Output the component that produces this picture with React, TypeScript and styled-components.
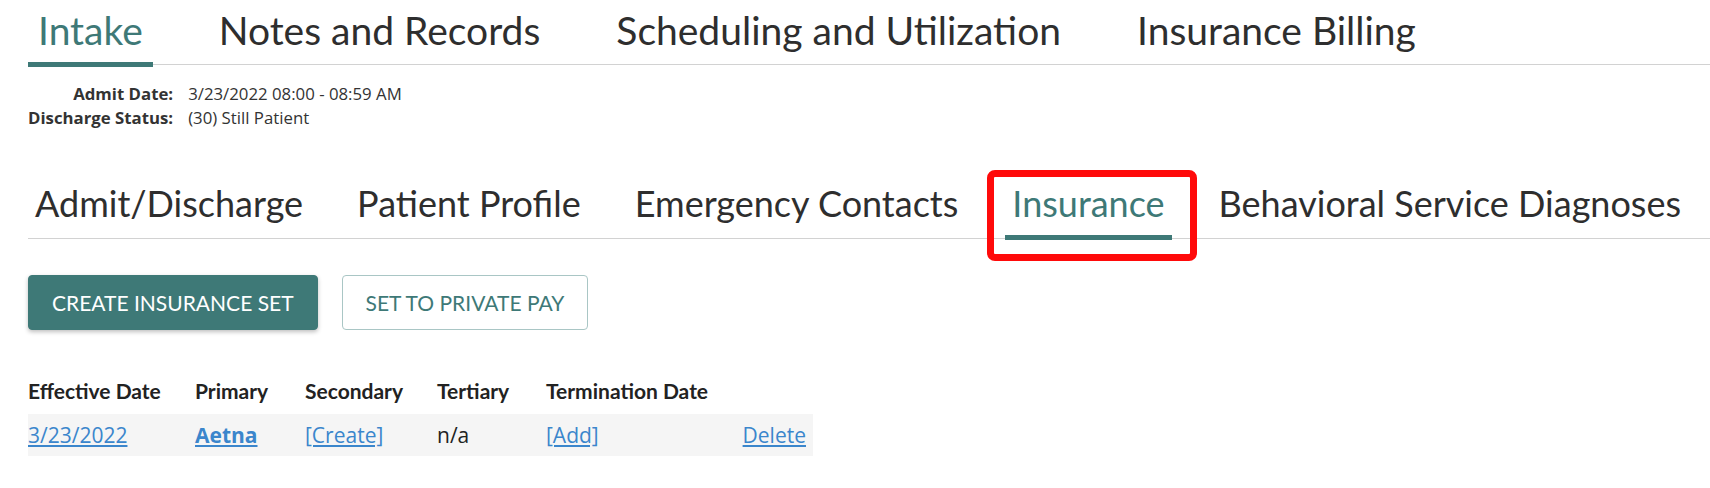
import React from "react";
import styled, { createGlobalStyle } from "styled-components";

const GlobalStyle = createGlobalStyle`
  body {
    margin: 0;
    background: #fff;
    font-family: Lato, "Open Sans", sans-serif;
    color: #2e2e2e;
  }
`;

const teal = "#3e7977";
const linkBlue = "#3b86cc";

const topTabs = ["Intake", "Notes and Records", "Scheduling and Utilization", "Insurance Billing"];
const subTabs = ["Admit/Discharge", "Patient Profile", "Emergency Contacts", "Insurance", "Behavioral Service Diagnoses"];

function App() {
  return (
    <>
      <GlobalStyle />
      <Page>
        <TopNav>
          {topTabs.map((t, i) => (
            <TopTab key={t} active={i === 0}>
              {t}
            </TopTab>
          ))}
        </TopNav>

        <Info>
          <InfoLabel>Admit Date:</InfoLabel>
          <InfoValue>3/23/2022 08:00 - 08:59 AM</InfoValue>
          <InfoLabel>Discharge Status:</InfoLabel>
          <InfoValue>(30) Still Patient</InfoValue>
        </Info>

        <SubNav>
          {subTabs.map((t) => (
            <SubTab key={t} active={t === "Insurance"}>
              {t}
              {t === "Insurance" && <Highlight />}
            </SubTab>
          ))}
        </SubNav>

        <Actions>
          <Button primary>Create Insurance Set</Button>
          <Button>Set to Private Pay</Button>
        </Actions>

        <Table>
          <HeadCell>Effective Date</HeadCell>
          <HeadCell>Primary</HeadCell>
          <HeadCell>Secondary</HeadCell>
          <HeadCell>Tertiary</HeadCell>
          <HeadCell>Termination Date</HeadCell>
          <HeadCell />
          <Row>
            <Cell>
              <Link href="#">3/23/2022</Link>
            </Cell>
            <Cell>
              <Link href="#" bold>
                Aetna
              </Link>
            </Cell>
            <Cell>
              <Link href="#">[Create]</Link>
            </Cell>
            <Cell>n/a</Cell>
            <Cell>
              <Link href="#">[Add]</Link>
            </Cell>
            <Cell right>
              <Link href="#">Delete</Link>
            </Cell>
          </Row>
        </Table>
      </Page>
    </>
  );
}

export default App;

const Page = styled.div`
  padding: 0 0 0 28px;
`;

const TopNav = styled.nav`
  display: flex;
  align-items: flex-end;
  gap: 56px;
  border-bottom: 1px solid #d2d2d2;
`;

const TopTab = styled.div<{ active?: boolean }>`
  font-size: 39px;
  line-height: 48px;
  padding: 6px 10px 8px;
  margin-bottom: -3px;
  color: ${(p) => (p.active ? teal : "#2e2e2e")};
  border-bottom: 5px solid ${(p) => (p.active ? teal : "transparent")};
  white-space: nowrap;
  cursor: pointer;
`;

const Info = styled.div`
  display: grid;
  grid-template-columns: max-content max-content;
  column-gap: 15px;
  margin-top: 17px;
  font-family: "Open Sans", sans-serif;
  font-size: 16.8px;
  line-height: 24px;
  color: #333;
`;

const InfoLabel = styled.div`
  font-weight: 700;
  text-align: right;
`;

const InfoValue = styled.div``;

const SubNav = styled.nav`
  display: flex;
  align-items: flex-end;
  gap: 40px;
  margin-top: 46px;
  border-bottom: 1px solid #d2d2d2;
`;

const SubTab = styled.div<{ active?: boolean }>`
  position: relative;
  font-size: 36px;
  line-height: 42px;
  padding: 6px 7px 11px;
  margin-bottom: -2px;
  color: ${(p) => (p.active ? teal : "#2e2e2e")};
  border-bottom: 5px solid ${(p) => (p.active ? teal : "transparent")};
  white-space: nowrap;
  cursor: pointer;
`;

const Highlight = styled.span`
  position: absolute;
  left: -18px;
  right: -25px;
  top: -6px;
  bottom: -26px;
  border: 7px solid #ff0a0a;
  border-radius: 8px;
  pointer-events: none;
`;

const Actions = styled.div`
  display: flex;
  gap: 24px;
  margin-top: 36px;
`;

const Button = styled.button<{ primary?: boolean }>`
  height: 55px;
  padding: 0 23px;
  font-family: Lato, sans-serif;
  font-size: 21px;
  text-transform: uppercase;
  border-radius: 4px;
  cursor: pointer;
  color: ${(p) => (p.primary ? "#fff" : teal)};
  background: ${(p) => (p.primary ? teal : "#fff")};
  border: 1px solid ${(p) => (p.primary ? teal : "#a9c6c5")};
  box-shadow: ${(p) => (p.primary ? "0 2px 4px rgba(0, 0, 0, 0.25)" : "none")};
`;

const Table = styled.div`
  display: grid;
  grid-template-columns: 167px 110px 132px 109px 1fr auto;
  width: 785px;
  margin-top: 47px;
  font-size: 21px;
`;

const HeadCell = styled.div`
  font-weight: 700;
  line-height: 28px;
  color: #222;
  padding-bottom: 9px;
`;

const Row = styled.div`
  display: contents;
`;

const Cell = styled.div<{ right?: boolean }>`
  background: #f5f5f5;
  height: 42px;
  display: flex;
  align-items: center;
  justify-content: ${(p) => (p.right ? "flex-end" : "flex-start")};
  padding-right: ${(p) => (p.right ? "7px" : "0")};
  font-family: "Open Sans", sans-serif;
  font-size: 21px;
  color: #222;
`;

const Link = styled.a<{ bold?: boolean }>`
  color: ${linkBlue};
  font-weight: ${(p) => (p.bold ? 700 : 400)};
  text-decoration: underline;
`;
